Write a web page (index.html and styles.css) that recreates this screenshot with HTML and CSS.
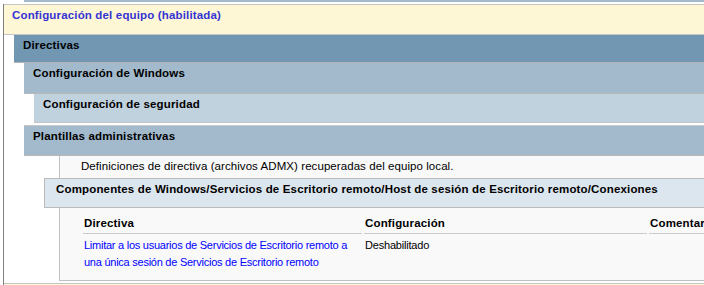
FILE: index.html
```html
<!DOCTYPE html>
<html lang="es">
<head>
<meta charset="utf-8">
<title>Informe de directivas</title>
<link rel="stylesheet" href="styles.css">
</head>
<body>
<div class="page">
  <div class="prev-bar"></div>
  <div class="spacer"></div>
  <section class="scope">
    <div class="he0">Configuración del equipo (habilitada)</div>
    <div class="he1">Directivas</div>
    <div class="he2 h-windows">Configuración de Windows</div>
    <div class="he3">Configuración de seguridad</div>
    <div class="he2 h-admin">Plantillas administrativas</div>
    <div class="he4i">Definiciones de directiva (archivos ADMX) recuperadas del equipo local.</div>
    <div class="he4">Componentes de Windows/Servicios de Escritorio remoto/Host de sesión de Escritorio remoto/Conexiones</div>
    <div class="he4body">
      <table class="info3">
        <thead>
          <tr>
            <th class="c1">Directiva</th>
            <th class="c2">Configuración</th>
            <th class="c3">Comentario</th>
          </tr>
        </thead>
        <tbody>
          <tr>
            <td><a class="explainlink" href="#">Limitar a los usuarios de Servicios de Escritorio remoto a<br>una única sesión de Servicios de Escritorio remoto</a></td>
            <td>Deshabilitado</td>
            <td></td>
          </tr>
        </tbody>
      </table>
    </div>
  </section>
  <section class="scope next">
    <div class="he0 he0-next"></div>
  </section>
</div>
</body>
</html>
```
FILE: styles.css
```css
html, body {
  margin: 0;
  padding: 0;
  background: #ffffff;
}

body {
  font-family: "Liberation Sans", Arial, sans-serif;
  font-size: 11.5px;
  letter-spacing: 0.07px;
  color: #000000;
  width: 704px;
  height: 285px;
  overflow: hidden;
}

.page {
  width: 704px;
}

.prev-bar {
  margin-left: 24px;
  height: 2px;
  background: #a2bacc;
}

.spacer {
  height: 2px;
}

.scope {
  margin-left: 3px;
  border-left: 1px solid #7f7f7f;
  padding-bottom: 2px;
}

.scope.next {
  padding-bottom: 0;
}

.he0, .he1, .he2, .he3, .he4 {
  box-sizing: border-box;
  font-weight: bold;
  letter-spacing: 0.16px;
  line-height: 13px;
  padding-top: 4px;
  white-space: nowrap;
  overflow: hidden;
}

.he0 {
  height: 31px;
  background: #fef7d6;
  border-top: 1px solid #c5c5c5;
  border-bottom: 1px solid #c5c5c5;
  color: #3434d2;
  padding-left: 8px;
}

.he0-next {
  height: 2px;
  border-bottom: none;
  padding: 0;
}

.he1 {
  margin-left: 10px;
  height: 28px;
  background: #7197b3;
  border-bottom: 1px solid #b4b4b4;
  padding-left: 9px;
}

.he2 {
  margin-left: 20px;
  background: #a2bacc;
  padding-left: 9px;
}

.h-windows {
  height: 31px;
  border-bottom: 1px solid #b8b8b8;
}

.h-admin {
  height: 31px;
  border-top: 1px solid #c8c8c8;
  border-bottom: 1px solid #b8b8b8;
}

.he3 {
  margin-left: 30px;
  height: 29px;
  background: #c0d2de;
  border-bottom: 1px solid #c4c4c4;
  padding-left: 9px;
  margin-bottom: 2px;
}

.he4i {
  margin-left: 55px;
  border-left: 1px solid #c0c0c0;
  background: #f9f9f9;
  padding: 4px 0 5px 21px;
  line-height: 13px;
  white-space: nowrap;
}

.he4 {
  margin-left: 40px;
  height: 30px;
  background: #dce6ee;
  border: 1px solid #bbbbbb;
  border-right: none;
  padding-left: 11px;
}

.he4body {
  margin-left: 55px;
  border-left: 1px solid #c0c0c0;
  border-bottom: 1px solid #c0c0c0;
  background: #f9f9f9;
  padding: 4px 0 6px 21px;
  overflow: hidden;
}

.info3 {
  table-layout: fixed;
  width: 853px;
  border-collapse: separate;
  border-spacing: 2px;
  line-height: 17px;
}

.info3 th, .info3 td {
  box-sizing: border-box;
  padding: 1px 10px 1px 1px;
  text-align: left;
  vertical-align: top;
  white-space: nowrap;
}

.info3 td {
  font-size: 11px;
  letter-spacing: -0.2px;
}

.info3 th {
  font-weight: bold;
  letter-spacing: 0.16px;
  border-bottom: 1px solid #cccccc;
}

.info3 .c1 { width: 279px; }
.info3 .c2 { width: 283px; }
.info3 .c3 { width: 283px; }

.explainlink {
  color: #0000ff;
  letter-spacing: -0.25px;
  text-decoration: none;
}
```
